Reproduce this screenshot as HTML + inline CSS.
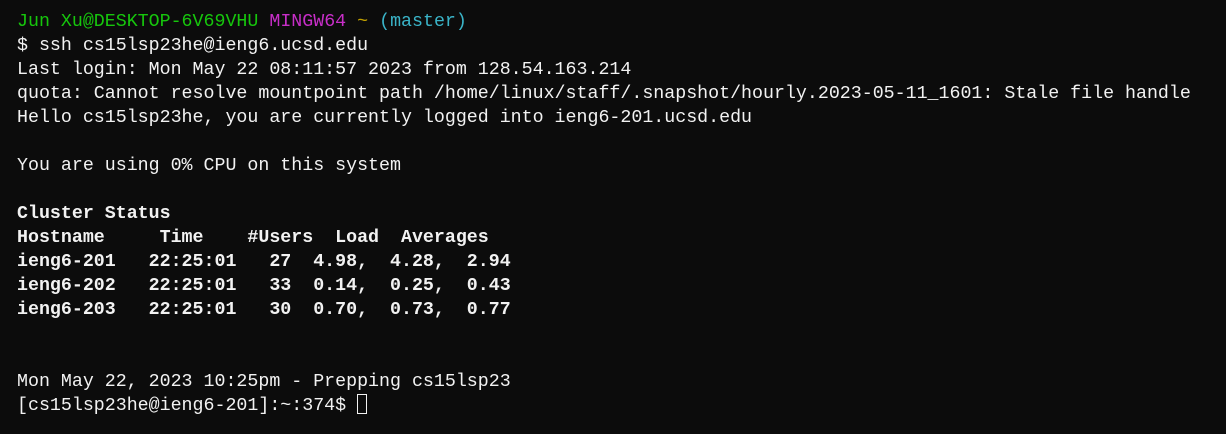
<!DOCTYPE html>
<html><head><style>
html,body{margin:0;padding:0;background:#0c0c0c;width:1226px;height:434px;overflow:hidden}
pre{margin:0;padding:10px 0 0 17px;font-family:"Liberation Mono",monospace;font-size:18.3px;line-height:24px;color:#f2f2f2;white-space:pre}
.g{color:#16c60c}.m{color:#c82ec8}.y{color:#c1a000}.c{color:#3ab4c8}
b{font-weight:bold}
.cur{display:inline-block;width:10px;height:20px;border:1px solid #f2f2f2;vertical-align:-4px;box-sizing:border-box}
</style></head><body><pre><span class="g">Jun Xu@DESKTOP-6V69VHU</span> <span class="m">MINGW64</span> <span class="y">~</span> <span class="c">(master)</span>
$ ssh cs15lsp23he@ieng6.ucsd.edu
Last login: Mon May 22 08:11:57 2023 from 128.54.163.214
quota: Cannot resolve mountpoint path /home/linux/staff/.snapshot/hourly.2023-05-11_1601: Stale file handle
Hello cs15lsp23he, you are currently logged into ieng6-201.ucsd.edu

You are using 0% CPU on this system

<b>Cluster Status</b>
<b>Hostname     Time    #Users  Load  Averages</b>
<b>ieng6-201   22:25:01   27  4.98,  4.28,  2.94</b>
<b>ieng6-202   22:25:01   33  0.14,  0.25,  0.43</b>
<b>ieng6-203   22:25:01   30  0.70,  0.73,  0.77</b>


Mon May 22, 2023 10:25pm - Prepping cs15lsp23
[cs15lsp23he@ieng6-201]:~:374$ <span class="cur"></span></pre></body></html>
